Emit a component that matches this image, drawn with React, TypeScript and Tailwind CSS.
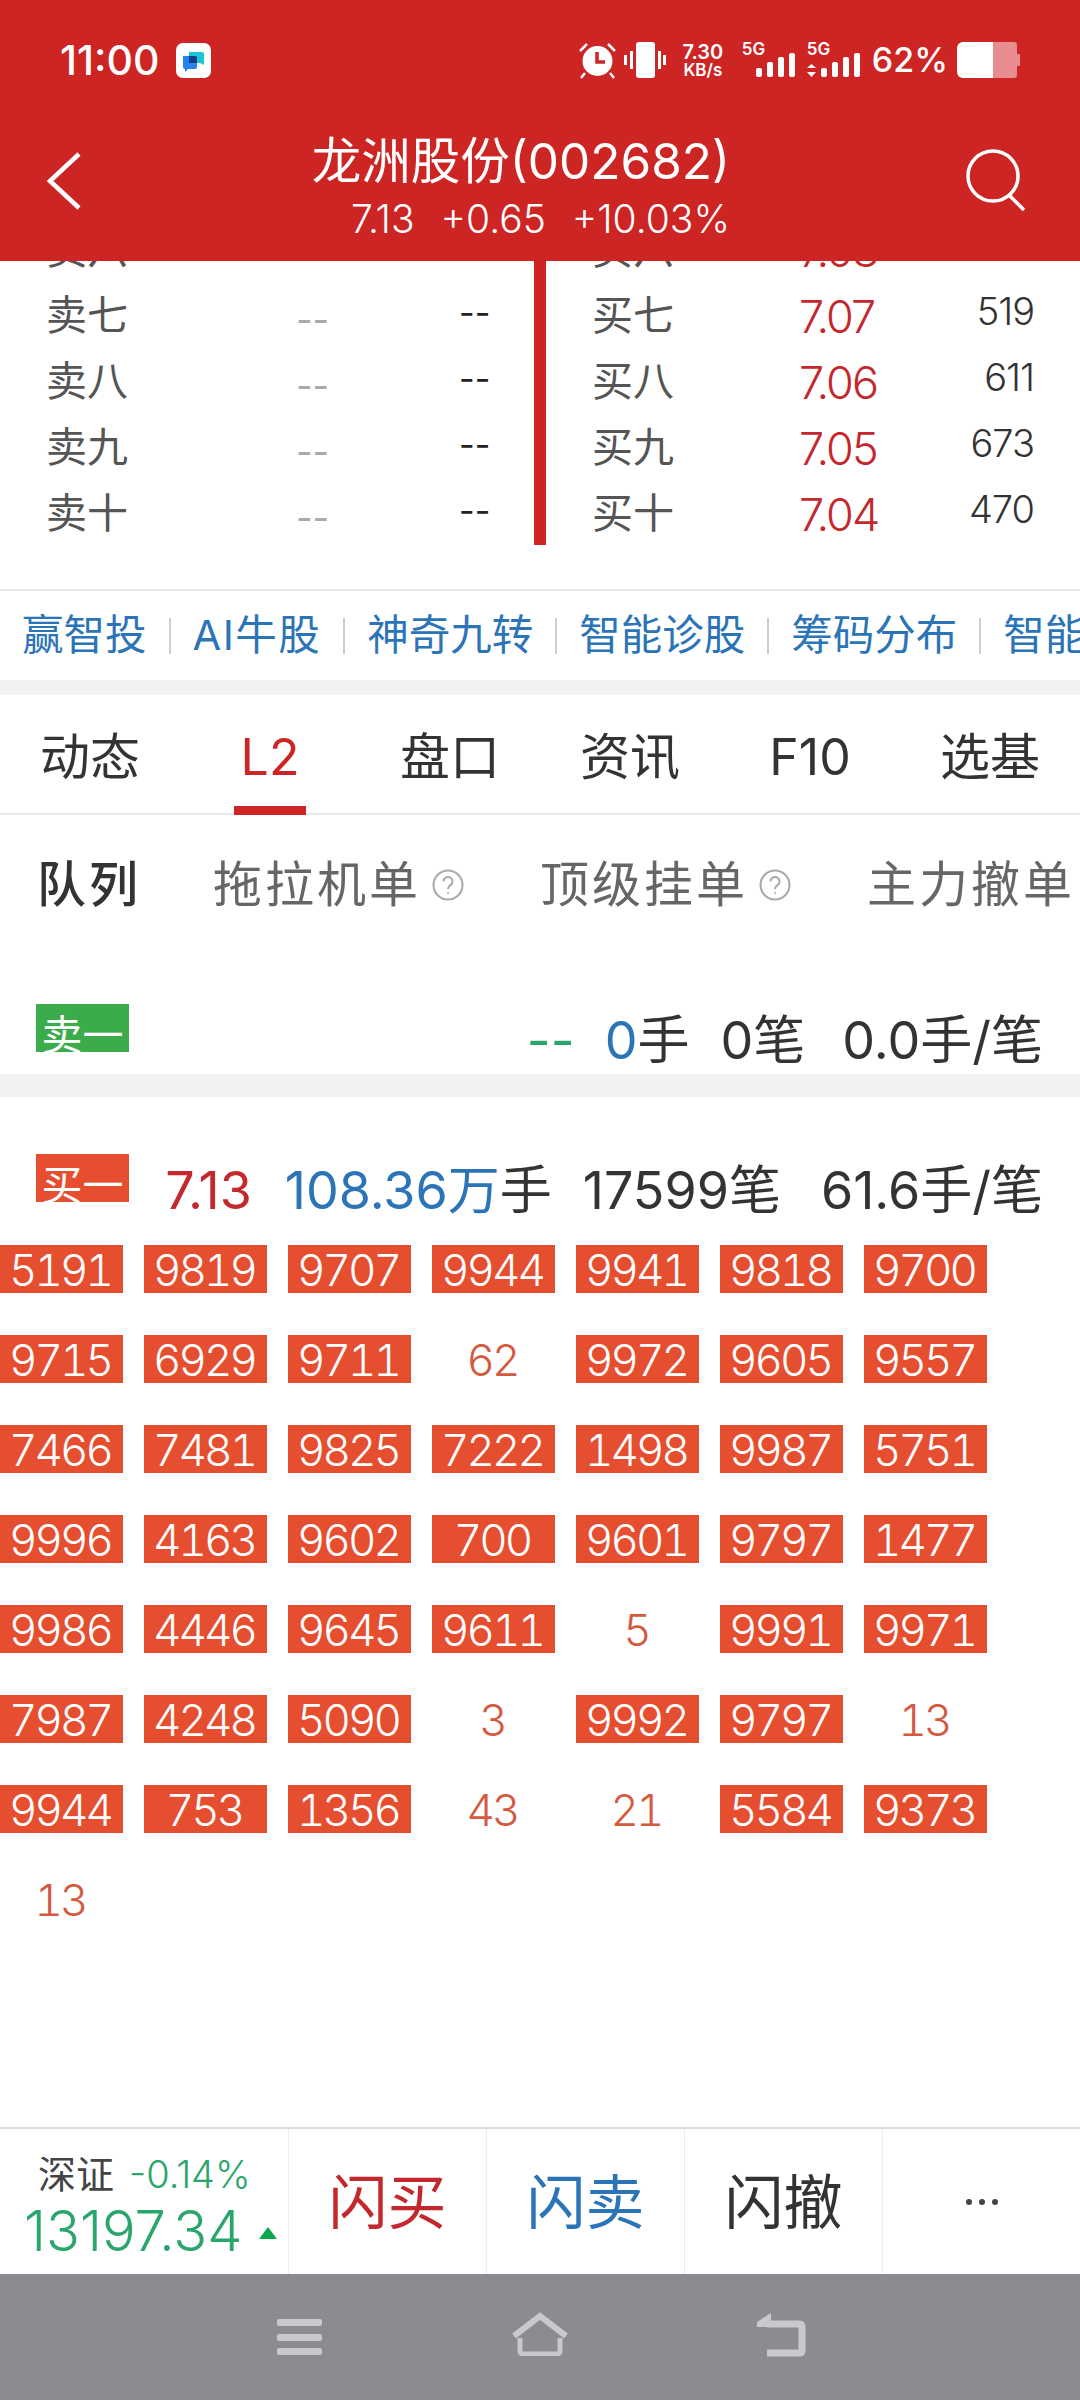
const depth = [
  { sell: "卖六", buy: "买六", price: "7.08", qty: "402" },
  { sell: "卖七", buy: "买七", price: "7.07", qty: "519" },
  { sell: "卖八", buy: "买八", price: "7.06", qty: "611" },
  { sell: "卖九", buy: "买九", price: "7.05", qty: "673" },
  { sell: "卖十", buy: "买十", price: "7.04", qty: "470" },
];

const links = ["赢智投", "AI牛股", "神奇九转", "智能诊股", "筹码分布", "智能选股"];
const tabs = ["动态", "L2", "盘口", "资讯", "F10", "选基"];

// plain cells (no orange box) are the numbers under 100
const queue = [
  "5191", "9819", "9707", "9944", "9941", "9818", "9700",
  "9715", "6929", "9711", "62", "9972", "9605", "9557",
  "7466", "7481", "9825", "7222", "1498", "9987", "5751",
  "9996", "4163", "9602", "700", "9601", "9797", "1477",
  "9986", "4446", "9645", "9611", "5", "9991", "9971",
  "7987", "4248", "5090", "3", "9992", "9797", "13",
  "9944", "753", "1356", "43", "21", "5584", "9373",
  "13",
];

function Signal({ arrows }: { arrows?: boolean }) {
  return (
    <div className="relative w-[54px] h-[36px]">
      <span className="absolute left-0 top-0 text-[17px] leading-[15px] font-semibold">5G</span>
      <svg width="54" height="36" viewBox="0 0 54 36" fill="#fff">
        {arrows && <path d="M0 26l4.500-4 4.500 4zM0 30l4.500 5 4.500-5z" />}
        <rect x="14" y="26" width="6" height="9" rx="2" />
        <rect x="25" y="20" width="6" height="15" rx="2" />
        <rect x="36" y="15" width="6" height="20" rx="2" />
        <rect x="47" y="11" width="6" height="24" rx="2" />
      </svg>
    </div>
  );
}

function StatusBar() {
  return (
    <div className="flex items-center h-[36px] mt-[42px] pl-[60px] pr-[60px] text-white">
      <span className="text-[41px] leading-none font-medium">11:00</span>
      <svg className="ml-[17px]" width="35" height="35" viewBox="0 0 35 35">
        <rect width="35" height="35" rx="7" fill="#fff" />
        <path d="M13 9h13a2 2 0 0 1 2 2v11l-4-2H13z" fill="#1cc4d6" />
        <path d="M7 13h12a2 2 0 0 1 2 2v9a2 2 0 0 1-2 2h-7l-3 3v-3a2 2 0 0 1-2-2z" fill="#2583f0" />
        <path d="M13 13h6a2 2 0 0 1 2 2v5h-8z" fill="#143f8f" />
      </svg>
      <div className="ml-auto flex items-center">
        <svg width="37" height="37" viewBox="0 0 37 37" fill="#fff">
          <circle cx="18.500" cy="19" r="15" />
          <path d="M18 10v10h8" fill="none" stroke="#cd2424" strokeWidth="3.500" />
          <path d="M1 9l7-7M36 9l-7-7M6 31l-4 5M31 31l4 5" stroke="#fff" strokeWidth="2.500" />
        </svg>
        <svg className="ml-[8px]" width="42" height="36" viewBox="0 0 42 36" fill="#fff">
          <rect x="12" y="0" width="19" height="36" rx="3" />
          <rect x="6" y="9" width="3" height="18" />
          <rect x="0" y="13" width="3" height="10" />
          <rect x="34" y="9" width="3" height="18" />
          <rect x="39" y="13" width="3" height="10" />
        </svg>
        <div className="ml-[15px] w-[44px] flex flex-col items-center font-semibold">
          <span className="text-[20px] leading-[20px]">7.30</span>
          <span className="text-[17px] leading-[16px]">KB/s</span>
        </div>
        <div className="ml-[17px]"><Signal /></div>
        <div className="ml-[11px]"><Signal arrows /></div>
        <span className="ml-[11px] text-[34px] leading-none font-medium">62%</span>
        <svg className="ml-[9px]" width="63" height="36" viewBox="0 0 63 36">
          <path d="M6 0h30v36H6a6 6 0 0 1-6-6V6a6 6 0 0 1 6-6z" fill="#fff" />
          <path d="M36 0h21a3 3 0 0 1 3 3v9h3v12h-3v9a3 3 0 0 1-3 3H36z" fill="#e88c8f" />
        </svg>
      </div>
    </div>
  );
}

function Header() {
  return (
    <header className="relative z-10 h-[261px] bg-[#cd2424] shrink-0">
      <StatusBar />
      <div className="flex mt-[59px]">
        <svg className="ml-[46px] mt-[15px]" width="36" height="58" viewBox="0 0 36 58" fill="none" stroke="#fff" strokeWidth="4.500">
          <path d="M33 2L4 29l29 27" />
        </svg>
        <div className="w-[648px] flex flex-col items-end text-white">
          <div className="text-[49.5px] leading-[50px] mt-[-1px]">龙洲股份(002682)</div>
          <div className="flex gap-[26px] text-[39px] leading-[40px] font-light mt-[13px]">
            <span>7.13</span>
            <span>+0.65</span>
            <span>+10.03%</span>
          </div>
        </div>
        <svg className="ml-[235px] mt-[12px]" width="64" height="64" viewBox="0 0 64 64" fill="none" stroke="#fff" strokeWidth="3.500">
          <circle cx="28" cy="27" r="25" />
          <path d="M44 46l15 15" />
        </svg>
      </div>
    </header>
  );
}

function DepthTable() {
  return (
    <section className="relative flex h-[372px] mt-[-44px]">
      <div className="w-[534px] shrink-0">
        {depth.map((row) => (
          <div key={row.sell} className="flex items-center h-[66px] pl-[46px] text-[41px] text-[#555]">
            <span className="w-[250px]">{row.sell}</span>
            <span className="w-[163px] pt-[8px] text-[36px] text-[#aaa]">--</span>
            <span className="pb-[8px] text-[34px] text-[#222]">--</span>
          </div>
        ))}
      </div>
      <div className="w-[12px] h-[328px] shrink-0 bg-[#cd2424]" />
      <div className="flex-1">
        {depth.map((row) => (
          <div key={row.buy} className="flex items-center h-[66px] pl-[46px] pr-[46px] text-[41px] text-[#555]">
            <span className="w-[207px]">{row.buy}</span>
            <span className="text-[#c4282d] text-[45px] leading-none font-light tracking-[-2px]">{row.price}</span>
            <span className="ml-auto pb-[10px] text-[38px] leading-none font-light tracking-[-1px] text-[#333]">{row.qty}</span>
          </div>
        ))}
      </div>
    </section>
  );
}

function LinkBar() {
  return (
    <nav className="flex items-center h-[91px] pl-[22px] border-t-2 border-[#e8e8e8] overflow-hidden text-[41.5px] leading-none text-[#2b74b8] whitespace-nowrap">
      {links.map((l, i) => (
        <div key={l} className="flex items-center shrink-0">
          {i > 0 && <span className="w-[2px] h-[36px] bg-[#cfcfcf] mx-[22px]" />}
          <span className={l.startsWith("AI") ? "tracking-[1.5px]" : ""}>{l}</span>
        </div>
      ))}
    </nav>
  );
}

function Tabs() {
  return (
    <div className="flex h-[120px] border-b-2 border-[#e9e9e9]">
      {tabs.map((t) => (
        <div key={t} className={`relative flex-1 flex justify-center pt-[36px] text-[50px] leading-[52px] ${t === "L2" ? "text-[#cd2424]" : "text-[#333]"}`}>
          {t}
          {t === "L2" && <span className="absolute left-[54px] bottom-[-2px] w-[72px] h-[9px] bg-[#cd2424]" />}
        </div>
      ))}
    </div>
  );
}

function Help() {
  return (
    <svg className="ml-[11px] mt-[2px]" width="32" height="32" viewBox="0 0 32 32" fill="none" stroke="#a9a9a9" strokeWidth="2">
      <circle cx="16" cy="16" r="14.500" />
      <path d="M11.500 12.500a4.500 4.500 0 1 1 7 3.700c-1.700 1.100-2.500 2-2.500 3.800" />
      <circle cx="16" cy="24" r="1" fill="#a9a9a9" stroke="none" />
    </svg>
  );
}

function SubTabs() {
  return (
    <div className="flex items-center h-[138px] pl-[37px] text-[49px] leading-none text-[#666] whitespace-nowrap tracking-[3px] overflow-hidden">
      <span className="font-medium text-[#333]">队列</span>
      <span className="ml-[72px]">拖拉机单</span>
      <Help />
      <span className="ml-[76px]">顶级挂单</span>
      <Help />
      <span className="ml-[76px]">主力撤单</span>
    </div>
  );
}

function Badge({ label, color }: { label: string; color: string }) {
  return (
    <div className={`w-[93px] h-[48px] overflow-hidden shrink-0 text-white text-[41px] leading-[48px] text-center pt-[7px] ${color}`}>
      {label}
    </div>
  );
}

function QueueGrid() {
  return (
    <div className="grid grid-cols-[repeat(7,123px)] gap-x-[21px] gap-y-[42px]">
      {queue.map((n, i) => {
        const boxed = n.length > 2;
        return (
          <div
            key={i}
            className={`h-[48px] pt-[2px] pr-[3px] flex items-center justify-center text-[44px] leading-none font-light tabular-nums tracking-[-3px] ${boxed ? "bg-[#e54e2f] text-white" : "text-[#d5593f]"}`}
          >
            {n}
          </div>
        );
      })}
    </div>
  );
}

function BottomBar() {
  return (
    <div className="flex h-[147px] border-t-2 border-[#dcdcdc] shrink-0">
      <div className="w-[288px] pl-[24px] pt-[26px] shrink-0">
        <div className="flex items-center pl-[14px] text-[38px] leading-[38px]">
          <span className="text-[#444]">深证</span>
          <span className="ml-[15px] text-[#2aa56b] font-light">-0.14%</span>
        </div>
        <div className="flex items-center mt-[12px]">
          <span className="text-[56px] leading-[52px] font-light text-[#2aa56b]">13197.34</span>
          <svg className="ml-[17px] mt-[4px]" width="18" height="12" viewBox="0 0 18 12">
            <path d="M9 0l9 12H0z" fill="#0aa84a" />
          </svg>
        </div>
      </div>
      {[
        ["闪买", "text-[#c4282d]"],
        ["闪卖", "text-[#2b74b8]"],
        ["闪撤", "text-[#333]"],
      ].map(([label, color]) => (
        <div key={label} className={`w-[198px] shrink-0 flex items-center justify-center pt-[4px] border-l border-[#ececec] text-[59px] ${color}`}>
          {label}
        </div>
      ))}
      <div className="flex-1 flex items-center justify-center gap-[7px] border-l border-[#ececec]">
        <span className="w-[6px] h-[6px] rounded-full bg-[#444]" />
        <span className="w-[6px] h-[6px] rounded-full bg-[#444]" />
        <span className="w-[6px] h-[6px] rounded-full bg-[#444]" />
      </div>
    </div>
  );
}

function NavBar() {
  return (
    <div className="relative h-[126px] bg-[#8b8c90] flex items-start shrink-0">
      <svg className="ml-[277px] mt-[45px]" width="45" height="36" viewBox="0 0 45 36" fill="#c9c9cb">
        <rect y="0" width="45" height="7" rx="2" />
        <rect y="15" width="45" height="7" rx="2" />
        <rect y="29" width="45" height="7" rx="2" />
      </svg>
      <svg className="ml-[189px] mt-[38px]" width="58" height="44" viewBox="0 0 58 44" fill="none" stroke="#c9c9cb" strokeWidth="6">
        <path d="M3 24L29 4l26 20" />
        <path d="M9 26v13a3 3 0 0 0 3 3h34a3 3 0 0 0 3-3V26" strokeWidth="5" />
      </svg>
      <svg className="ml-[188px] mt-[39px]" width="50" height="44" viewBox="0 0 50 44" fill="none" stroke="#c9c9cb" strokeWidth="7">
        <path d="M10 11h33a2 2 0 0 1 2 2v25a2 2 0 0 1-2 2H10" />
        <path d="M14 0L0 9v5h14z" fill="#c9c9cb" stroke="none" />
      </svg>
    </div>
  );
}

export default function App() {
  return (
    <div className="w-[1080px] h-[2400px] overflow-hidden flex flex-col bg-white font-['Inter','Noto_Sans_CJK_SC',sans-serif]">
      <Header />
      <main className="flex-1 min-h-0">
        <DepthTable />
        <LinkBar />
        <div className="h-[15px] bg-[#f2f2f2]" />
        <Tabs />
        <SubTabs />
        <div className="flex h-[121px] pt-[51px] pl-[36px] pr-[37px] text-[52px] leading-[48px] text-[#333] whitespace-nowrap">
          <Badge label="卖一" color="bg-[#3cab4b]" />
          <div className="ml-auto mt-[13px] flex">
            <span className="text-[#2aa56b]">--</span>
            <span className="ml-[30px]"><span className="text-[#2b74b8]">0</span>手</span>
            <span className="ml-[31px]">0笔</span>
            <span className="ml-[37px]">0.0手/笔</span>
          </div>
        </div>
        <div className="h-[23px] bg-[#f2f2f2]" />
        <div className="flex h-[148px] pt-[57px] pl-[36px] pr-[37px] text-[52px] leading-[48px] text-[#333] whitespace-nowrap">
          <Badge label="买一" color="bg-[#e54e2f]" />
          <div className="ml-auto mt-[13px] flex">
            <span className="text-[#c4282d]">7.13</span>
            <span className="ml-[33px]"><span className="text-[#2b74b8]">108.36万</span>手</span>
            <span className="ml-[31px]">17599笔</span>
            <span className="ml-[40px]">61.6手/笔</span>
          </div>
        </div>
        <QueueGrid />
      </main>
      <BottomBar />
      <NavBar />
    </div>
  );
}
